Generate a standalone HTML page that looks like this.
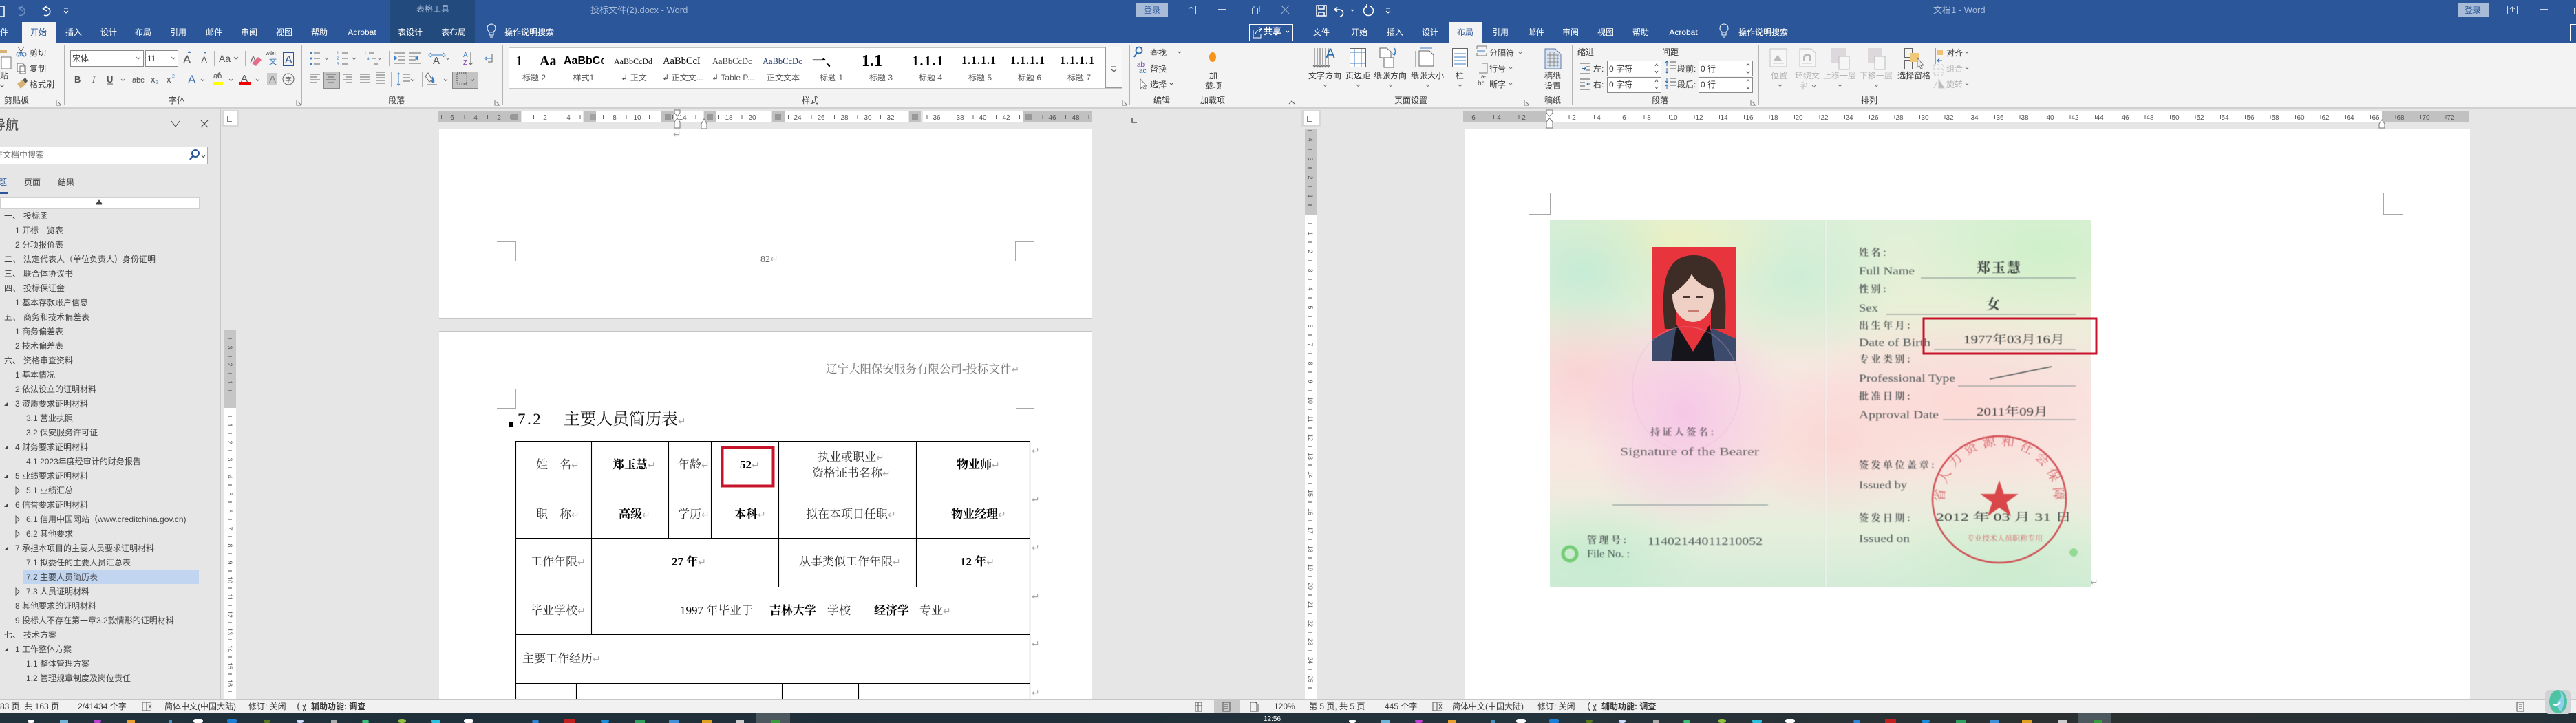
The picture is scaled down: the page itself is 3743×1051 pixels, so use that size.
<!DOCTYPE html>
<html lang="zh-CN"><head><meta charset="utf-8"><title>Word</title>
<style>
html,body{margin:0;padding:0;background:#e6e6e6}
body{position:relative;width:3743px;height:1051px;overflow:hidden;font-family:"Liberation Sans","Noto Sans CJK SC",sans-serif}
div,span,svg{position:absolute}
span{white-space:nowrap;line-height:12px;font-size:12px;color:#3a3a3a}
span i{position:static;font:normal 14px/12px "DejaVu Sans",sans-serif;color:#aaa}
.c{transform:translateX(-50%)}
.w{color:#fff}
.g{color:#b4b4b4}
.n{color:#444}
.u{line-height:17px;font-size:17px;font-family:"Liberation Serif","Noto Serif CJK SC",serif;color:#333}
.u b{color:#000}
.s{color:#555}
.r{background:#c1c1c1;top:162px;height:16px}
.x{background:#fff;top:162px;height:16px}
.ri{height:16px;top:162px}
</style></head><body>

<!-- chrome backgrounds -->
<div style="left:0;top:0;width:3743px;height:62px;background:#2b579a"></div>
<div style="left:566px;top:0;width:124px;height:62px;background:#234a7d"></div>
<div style="left:0;top:62px;width:3743px;height:94px;background:#f3f3f3;border-bottom:2px solid #d0d0d0"></div>
<div style="left:32px;top:32px;width:49px;height:31px;background:#f3f3f3"></div>
<div style="left:2105px;top:32px;width:49px;height:31px;background:#f3f3f3"></div>
<div style="left:1651px;top:5px;width:46px;height:19px;background:#a8bcd8"></div>
<div style="left:3571px;top:5px;width:45px;height:19px;background:#a8bcd8"></div>
<div style="left:1815px;top:35px;width:62px;height:23px;border:1px solid #fff"></div>
<div style="left:3735px;top:35px;width:20px;height:23px;border:1px solid #fff"></div>

<!-- titles -->
<span class="c" style="left:629px;top:7px;color:#a9bcd8">表格工具</span>
<span style="left:858px;top:9px;color:#a9bcd8;font-size:13px">投标文件(2).docx - Word</span>
<span style="left:2809px;top:9px;color:#a9bcd8;font-size:13px">文档1 - Word</span>
<span class="c" style="left:1674px;top:9px;color:#2b579a">登录</span>
<span class="c" style="left:3593px;top:9px;color:#2b579a">登录</span>
<span style="left:1836px;top:40px;color:#fff;font-weight:bold;font-size:13px">共享</span>

<!-- tabs left -->
<span class="w" style="left:-12px;top:41px">文件</span>
<span class="c" style="left:56px;top:41px;color:#2b579a">开始</span>
<span class="w c" style="left:107px;top:41px">插入</span>
<span class="w c" style="left:158px;top:41px">设计</span>
<span class="w c" style="left:208px;top:41px">布局</span>
<span class="w c" style="left:259px;top:41px">引用</span>
<span class="w c" style="left:311px;top:41px">邮件</span>
<span class="w c" style="left:362px;top:41px">审阅</span>
<span class="w c" style="left:413px;top:41px">视图</span>
<span class="w c" style="left:464px;top:41px">帮助</span>
<span class="w c" style="left:526px;top:41px">Acrobat</span>
<span class="w c" style="left:596px;top:41px">表设计</span>
<span class="w c" style="left:659px;top:41px">表布局</span>
<span class="w" style="left:733px;top:41px">操作说明搜索</span>
<!-- tabs right -->
<span class="w c" style="left:1920px;top:41px">文件</span>
<span class="w c" style="left:1975px;top:41px">开始</span>
<span class="w c" style="left:2027px;top:41px">插入</span>
<span class="w c" style="left:2078px;top:41px">设计</span>
<span class="c" style="left:2129px;top:41px;color:#2b579a">布局</span>
<span class="w c" style="left:2180px;top:41px">引用</span>
<span class="w c" style="left:2232px;top:41px">邮件</span>
<span class="w c" style="left:2282px;top:41px">审阅</span>
<span class="w c" style="left:2333px;top:41px">视图</span>
<span class="w c" style="left:2384px;top:41px">帮助</span>
<span class="w c" style="left:2446px;top:41px">Acrobat</span>
<span class="w" style="left:2526px;top:41px">操作说明搜索</span>

<!-- left ribbon -->
<span style="left:0;top:104px">贴</span>
<span style="left:43px;top:71px">剪切</span>
<span style="left:43px;top:94px">复制</span>
<span style="left:43px;top:117px">格式刷</span>
<span class="c" style="left:24px;top:140px">剪贴板</span>
<div style="left:102px;top:73px;width:105px;height:22px;background:#fff;border:1px solid #8a8a8a"></div>
<div style="left:211px;top:73px;width:46px;height:22px;background:#fff;border:1px solid #8a8a8a"></div>
<span style="left:105px;top:79px">宋体</span>
<span style="left:214px;top:79px">11</span>
<div style="left:470px;top:104px;width:22px;height:23px;background:#c4c4c4;border:1px solid #8a8a8a"></div>
<div style="left:657px;top:104px;width:36px;height:23px;background:#c4c4c4;border:1px solid #8a8a8a"></div>
<span class="c" style="left:257px;top:140px">字体</span>
<span class="c" style="left:576px;top:140px">段落</span>
<span class="c" style="left:1177px;top:140px">样式</span>
<span style="left:1671px;top:71px">查找</span>
<span style="left:1671px;top:94px">替换</span>
<span style="left:1671px;top:117px">选择</span>
<span class="c" style="left:1688px;top:140px">编辑</span>
<span class="c" style="left:1763px;top:104px">加</span>
<span class="c" style="left:1763px;top:119px">载项</span>
<span class="c" style="left:1762px;top:140px">加载项</span>

<!-- style gallery -->
<div style="left:739px;top:68px;width:891px;height:58px;background:#fff;border-top:2px solid #c6c6c6;border-bottom:2px solid #c6c6c6;border-left:1px solid #c6c6c6"></div>
<div style="left:1606px;top:68px;width:23px;height:58px;background:#f8f8f8;border:1px solid #999"></div>
<span style="left:749px;top:79px;font:20px/20px 'Liberation Serif',serif;color:#000">1</span>
<span style="left:784px;top:79px;font:bold 20px/20px 'Liberation Serif',serif;color:#000">Aa</span>
<div style="left:819px;top:76px;width:59px;height:26px;overflow:hidden"><span style="left:0;top:4px;font:bold 16px/18px 'Liberation Sans',sans-serif;color:#000">AaBbCc</span></div>
<div style="left:892px;top:76px;width:58px;height:26px;overflow:hidden"><span style="left:0;top:6px;font:12px/14px 'Liberation Serif',serif;color:#000">AaBbCcDd</span></div>
<span style="left:963px;top:81px;font:14.5px/16px 'Liberation Serif',serif;color:#000">AaBbCcI</span>
<div style="left:1035px;top:76px;width:59px;height:26px;overflow:hidden"><span style="left:0;top:6px;font:12.5px/14px 'Liberation Serif',serif;color:#444">AaBbCcDc</span></div>
<div style="left:1108px;top:76px;width:58px;height:26px;overflow:hidden"><span style="left:0;top:6px;font:12.5px/14px 'Liberation Serif',serif;color:#1f3864">AaBbCcDc</span></div>
<span style="left:1180px;top:76px;font:bold 20px/22px 'Noto Serif CJK SC',serif;color:#000">一、</span>
<span style="left:1252px;top:77px;font:bold 24px/24px 'Liberation Serif',serif;color:#000">1.1</span>
<span style="left:1325px;top:79px;font:bold 20px/20px 'Liberation Serif',serif;color:#000;letter-spacing:1.5px">1.1.1</span>
<div style="left:1397px;top:76px;width:57px;height:26px;overflow:hidden"><span style="left:0;top:5px;font:bold 16px/16px 'Liberation Serif',serif;color:#000;letter-spacing:1px">1.1.1.1</span></div>
<div style="left:1468px;top:76px;width:58px;height:26px;overflow:hidden"><span style="left:0;top:5px;font:bold 16px/16px 'Liberation Serif',serif;color:#000;letter-spacing:1px">1.1.1.1</span></div>
<div style="left:1540px;top:76px;width:58px;height:26px;overflow:hidden"><span style="left:0;top:5px;font:bold 16px/16px 'Liberation Serif',serif;color:#000;letter-spacing:1px">1.1.1.1</span></div>
<span class="s c" style="left:776px;top:107px">标题 2</span>
<span class="s c" style="left:848px;top:107px">样式1</span>
<span class="s c" style="left:921px;top:107px">↲ 正文</span>
<span class="s c" style="left:992px;top:107px">↲ 正文文...</span>
<span class="s c" style="left:1065px;top:107px">↲ Table P...</span>
<span class="s c" style="left:1138px;top:107px">正文文本</span>
<span class="s c" style="left:1208px;top:107px">标题 1</span>
<span class="s c" style="left:1280px;top:107px">标题 3</span>
<span class="s c" style="left:1352px;top:107px">标题 4</span>
<span class="s c" style="left:1424px;top:107px">标题 5</span>
<span class="s c" style="left:1496px;top:107px">标题 6</span>
<span class="s c" style="left:1568px;top:107px">标题 7</span>

<!-- right ribbon -->
<span class="c" style="left:1925px;top:104px">文字方向</span>
<span class="c" style="left:1973px;top:104px">页边距</span>
<span class="c" style="left:2020px;top:104px">纸张方向</span>
<span class="c" style="left:2074px;top:104px">纸张大小</span>
<span class="c" style="left:2121px;top:104px">栏</span>
<span style="left:2164px;top:71px">分隔符</span>
<span style="left:2164px;top:94px">行号</span>
<span style="left:2164px;top:117px">断字</span>
<span class="c" style="left:2050px;top:140px">页面设置</span>
<span class="c" style="left:2256px;top:104px">稿纸</span>
<span class="c" style="left:2256px;top:119px">设置</span>
<span class="c" style="left:2256px;top:140px">稿纸</span>
<span style="left:2292px;top:70px">缩进</span>
<span style="left:2415px;top:70px">间距</span>
<span style="left:2315px;top:94px">左:</span>
<span style="left:2315px;top:117px">右:</span>
<span style="left:2437px;top:94px">段前:</span>
<span style="left:2437px;top:117px">段后:</span>
<div style="left:2335px;top:88px;width:77px;height:21px;background:#fff;border:1px solid #8a8a8a"></div>
<div style="left:2335px;top:112px;width:77px;height:21px;background:#fff;border:1px solid #8a8a8a"></div>
<div style="left:2468px;top:88px;width:77px;height:21px;background:#fff;border:1px solid #8a8a8a"></div>
<div style="left:2468px;top:112px;width:77px;height:21px;background:#fff;border:1px solid #8a8a8a"></div>
<span style="left:2338px;top:94px">0 字符</span>
<span style="left:2338px;top:117px">0 字符</span>
<span style="left:2471px;top:94px">0 行</span>
<span style="left:2471px;top:117px">0 行</span>
<span class="c" style="left:2412px;top:140px">段落</span>
<span class="g c" style="left:2585px;top:104px">位置</span>
<span class="g c" style="left:2626px;top:104px">环绕文</span>
<span class="g" style="left:2614px;top:119px">字</span>
<span class="g c" style="left:2673px;top:104px">上移一层</span>
<span class="g c" style="left:2726px;top:104px">下移一层</span>
<span class="c" style="left:2781px;top:104px">选择窗格</span>
<span style="left:2828px;top:71px">对齐</span>
<span class="g" style="left:2828px;top:94px">组合</span>
<span class="g" style="left:2828px;top:117px">旋转</span>
<span class="c" style="left:2716px;top:140px">排列</span>

<!-- nav panel -->
<div style="left:0;top:158px;width:320px;height:858px;background:#e6e6e6;border-right:1px solid #c8c8c8"></div>
<span style="left:-11px;top:173px;font-size:19px;line-height:20px;color:#444">导航</span>
<div style="left:-2px;top:213px;width:302px;height:24px;background:#fff;border:1px solid #ababab"></div>
<span style="left:-8px;top:219px;color:#777">在文档中搜索</span>
<span style="left:-14px;top:259px;color:#2b579a">标题</span>
<span class="n" style="left:35px;top:259px">页面</span>
<span class="n" style="left:84px;top:259px">结果</span>
<div style="left:0;top:279px;width:11px;height:3px;background:#2b579a"></div>
<div style="left:0;top:287px;width:288px;height:15px;background:#fff;border:1px solid #cfcfcf"></div>
<div style="left:33px;top:829px;width:256px;height:20px;background:#c2d5f0"></div>
<span class="n" style="left:6px;top:308px">一、</span><span class="n" style="left:34px;top:308px">投标函</span>
<span class="n" style="left:22px;top:329px">1 开标一览表</span>
<span class="n" style="left:22px;top:350px">2 分项报价表</span>
<span class="n" style="left:6px;top:371px">二、</span><span class="n" style="left:34px;top:371px">法定代表人（单位负责人）身份证明</span>
<span class="n" style="left:6px;top:392px">三、</span><span class="n" style="left:34px;top:392px">联合体协议书</span>
<span class="n" style="left:6px;top:413px">四、</span><span class="n" style="left:34px;top:413px">投标保证金</span>
<span class="n" style="left:22px;top:434px">1 基本存款账户信息</span>
<span class="n" style="left:6px;top:455px">五、</span><span class="n" style="left:34px;top:455px">商务和技术偏差表</span>
<span class="n" style="left:22px;top:476px">1 商务偏差表</span>
<span class="n" style="left:22px;top:497px">2 技术偏差表</span>
<span class="n" style="left:6px;top:518px">六、</span><span class="n" style="left:34px;top:518px">资格审查资料</span>
<span class="n" style="left:22px;top:539px">1 基本情况</span>
<span class="n" style="left:22px;top:560px">2 依法设立的证明材料</span>
<span class="n" style="left:22px;top:581px">3 资质要求证明材料</span>
<span class="n" style="left:38px;top:602px">3.1 营业执照</span>
<span class="n" style="left:38px;top:623px">3.2 保安服务许可证</span>
<span class="n" style="left:22px;top:644px">4 财务要求证明材料</span>
<span class="n" style="left:38px;top:665px">4.1 2023年度经审计的财务报告</span>
<span class="n" style="left:22px;top:686px">5 业绩要求证明材料</span>
<span class="n" style="left:38px;top:707px">5.1 业绩汇总</span>
<span class="n" style="left:22px;top:728px">6 信誉要求证明材料</span>
<span class="n" style="left:38px;top:749px">6.1 信用中国网站（www.creditchina.gov.cn)</span>
<span class="n" style="left:38px;top:770px">6.2 其他要求</span>
<span class="n" style="left:22px;top:791px">7 承担本项目的主要人员要求证明材料</span>
<span class="n" style="left:38px;top:812px">7.1 拟委任的主要人员汇总表</span>
<span class="n" style="left:38px;top:833px">7.2 主要人员简历表</span>
<span class="n" style="left:38px;top:854px">7.3 人员证明材料</span>
<span class="n" style="left:22px;top:875px">8 其他要求的证明材料</span>
<span class="n" style="left:22px;top:896px">9 投标人不存在第一章3.2款情形的证明材料</span>
<span class="n" style="left:6px;top:917px">七、</span><span class="n" style="left:34px;top:917px">技术方案</span>
<span class="n" style="left:22px;top:938px">1 工作整体方案</span>
<span class="n" style="left:38px;top:959px">1.1 整体管理方案</span>
<span class="n" style="left:38px;top:980px">1.2 管理规章制度及岗位责任</span>

<!-- pages -->
<div style="left:638px;top:187px;width:948px;height:275px;background:#fff;border-bottom:1px solid #c6c6c6"></div>
<div style="left:638px;top:481px;width:948px;height:535px;background:#fff;border-top:1px solid #c6c6c6"></div>
<div style="left:2128px;top:187px;width:1460px;height:829px;background:#fff;border-left:1px solid #c6c6c6"></div>
<span style="left:978px;top:190px"><i>↵</i></span>
<span style="left:1105px;top:371px;font-family:'Liberation Serif',serif;color:#666;font-size:14px">82<i>↵</i></span>

<!-- horizontal ruler left -->
<div class="r" style="left:636px;width:121px"></div>
<div class="x" style="left:759px;width:88px"></div>
<div class="r" style="left:849px;width:17px"></div>
<div class="x" style="left:866px;width:95px"></div>
<div class="r" style="left:961px;width:18px"></div>
<div class="x" style="left:980px;width:42px"></div>
<div class="r" style="left:1023px;width:17px"></div>
<div class="x" style="left:1041px;width:80px"></div>
<div class="r" style="left:1122px;width:18px"></div>
<div class="x" style="left:1141px;width:179px"></div>
<div class="r" style="left:1321px;width:17px"></div>
<div class="x" style="left:1341px;width:145px"></div>
<div class="r" style="left:1486px;width:100px"></div>
<!-- horizontal ruler right -->
<div class="r" style="left:2126px;width:121px"></div>
<div class="x" style="left:2247px;width:1214px"></div>
<div class="r" style="left:3461px;width:127px"></div>
<!-- tick overlays -->
<div class="ri" style="left:640px;width:946px;background:repeating-linear-gradient(90deg,transparent 0 0.8px,#666 0.8px 1.8px,transparent 1.8px 33.6px);background-size:100% 6px;background-repeat:no-repeat;background-position:0 5px"></div>
<div class="ri" style="left:2133px;width:1455px;background:repeating-linear-gradient(90deg,transparent 0 0.8px,#666 0.8px 1.8px,transparent 1.8px 36.4px);background-size:100% 6px;background-repeat:no-repeat;background-position:0 5px"></div>

<!-- vertical rulers -->
<div style="left:326px;top:480px;width:17px;height:113px;background:#c6c6c6"></div>
<div style="left:326px;top:593px;width:17px;height:423px;background:#fff"></div>
<div style="left:1896px;top:187px;width:17px;height:126px;background:#c6c6c6"></div>
<div style="left:1896px;top:313px;width:17px;height:703px;background:#fff"></div>
<div style="left:323px;top:160px;width:24px;height:24px;background:#d8d8d8"></div>
<div style="left:326px;top:162px;width:18px;height:20px;background:#fff"></div>
<div style="left:1891px;top:160px;width:29px;height:24px;background:#d8d8d8"></div>
<div style="left:1895px;top:162px;width:21px;height:20px;background:#fff"></div>

<!-- header + table text -->
<span class="u" style="left:1200px;top:528px;font-size:16.5px;color:#777">辽宁大阳保安服务有限公司-投标文件<i>↵</i></span>
<div style="left:748px;top:549px;width:728px;height:1px;background:#808080"></div>
<div style="left:740px;top:614px;width:5px;height:6px;background:#000"></div>
<span style="left:752px;top:598px;font:23px/24px 'Liberation Serif',serif;color:#111;letter-spacing:2.5px">7.2</span>
<span style="left:819px;top:598px;font:23.7px/24px 'Liberation Serif','Noto Serif CJK SC',serif;color:#111">主要人员简历表<i>↵</i></span>

<span class="u" style="left:779px;top:667px">姓　名<i>↵</i></span>
<span class="u" style="left:890px;top:667px"><b>郑玉慧</b><i>↵</i></span>
<span class="u" style="left:985px;top:667px">年龄<i>↵</i></span>
<span class="u" style="left:1075px;top:667px"><b>52</b><i>↵</i></span>
<span class="u" style="left:1188px;top:656px">执业或职业<i>↵</i></span>
<span class="u" style="left:1180px;top:679px">资格证书名称<i>↵</i></span>
<span class="u" style="left:1390px;top:667px"><b>物业师</b><i>↵</i></span>
<span class="u" style="left:779px;top:739px">职　称<i>↵</i></span>
<span class="u" style="left:899px;top:739px"><b>高级</b><i>↵</i></span>
<span class="u" style="left:985px;top:739px">学历<i>↵</i></span>
<span class="u" style="left:1067px;top:739px"><b>本科</b><i>↵</i></span>
<span class="u" style="left:1171px;top:739px">拟在本项目任职<i>↵</i></span>
<span class="u" style="left:1382px;top:739px"><b>物业经理</b><i>↵</i></span>
<span class="u" style="left:771px;top:808px">工作年限<i>↵</i></span>
<span class="u" style="left:976px;top:808px"><b>27 年</b><i>↵</i></span>
<span class="u" style="left:1161px;top:808px">从事类似工作年限<i>↵</i></span>
<span class="u" style="left:1395px;top:808px"><b>12 年</b><i>↵</i></span>
<span class="u" style="left:771px;top:879px">毕业学校<i>↵</i></span>
<span class="u" style="left:988px;top:879px"><b style="font-weight:normal">1997</b> 年毕业于</span>
<span class="u" style="left:1118px;top:879px"><b>吉林大学</b></span>
<span class="u" style="left:1202px;top:879px">学校</span>
<span class="u" style="left:1270px;top:879px"><b>经济学</b></span>
<span class="u" style="left:1336px;top:879px">专业<i>↵</i></span>
<span class="u" style="left:759px;top:949px">主要工作经历<i>↵</i></span>
<span style="left:1499px;top:650px"><i>↵</i></span>
<span style="left:1499px;top:721px"><i>↵</i></span>
<span style="left:1499px;top:791px"><i>↵</i></span>
<span style="left:1499px;top:862px"><i>↵</i></span>
<span style="left:1499px;top:931px"><i>↵</i></span>
<span style="left:1499px;top:1002px"><i>↵</i></span>
<span style="left:3037px;top:841px"><i>↵</i></span>

<!-- certificate image -->
<div style="left:2252px;top:320px;width:786px;height:533px;background:
radial-gradient(ellipse 150px 170px at 25% 53%,rgba(245,192,232,.8),transparent),
radial-gradient(ellipse 240px 130px at 76% 50%,rgba(252,216,212,.9),transparent),
radial-gradient(ellipse 130px 110px at 6% 42%,rgba(250,204,208,.7),transparent),
radial-gradient(ellipse 150px 110px at 52% 60%,rgba(250,210,208,.7),transparent),
radial-gradient(ellipse 150px 120px at 6% 14%,rgba(190,234,214,.8),transparent),
radial-gradient(ellipse 180px 90px at 22% 6%,rgba(238,240,190,.8),transparent),
radial-gradient(ellipse 150px 120px at 46% 16%,rgba(198,236,214,.75),transparent),
radial-gradient(ellipse 200px 110px at 92% 8%,rgba(198,240,196,.7),transparent),
radial-gradient(ellipse 160px 90px at 8% 92%,rgba(190,234,204,.75),transparent),
radial-gradient(ellipse 200px 100px at 85% 95%,rgba(200,236,204,.75),transparent),
linear-gradient(180deg,#dff0d8 0,#e8f0d6 22%,#f9e4e2 46%,#f8e6e0 66%,#e5efdc 85%,#d4ecd8 100%)"></div>
<div style="left:2651px;top:320px;width:4px;height:533px;background:linear-gradient(90deg,rgba(190,190,190,.18),rgba(255,255,255,.4),rgba(200,200,200,.15))"></div>

<!-- master svg: lines, icons, ruler numbers -->
<svg style="left:0;top:0" width="3743" height="1051" viewBox="0 0 3743 1051" fill="none">
<!-- ribbon separators -->
<g stroke="#b4b4b4"><path d="M93.500 66V152M438.500 66V152M730.500 66V152M1641.500 66V152M1733.500 66V152M1791.500 66V152M2227.500 66V152M2284.500 66V152M2555.500 66V152M2878.500 66V152"/>
<path d="M311.500 74V96M356.500 74V96M264.500 104V126M565.500 74V96M620.500 74V96M665.500 74V96M697.500 74V96M568.500 104V126M613.500 104V126"/></g>

<!-- QAT left -->
<g stroke="#fff" stroke-width="1.500"><path d="M-4 9H6V24H-4"/><path d="M62 13a6 6 0 1 1 2 9M68 8l-5 5 5 3"/></g>
<path d="M36 12a6 6 0 1 0 -2 10M29 8l5 4-5 4" stroke="#6f8fbf" stroke-width="1.500" transform="matrix(-1 0 0 1 62 0)"/>
<path d="M93 12h6M93 16l3 3 3-3" stroke="#fff"/>
<!-- QAT right -->
<g stroke="#fff" stroke-width="1.500"><rect x="1913" y="8" width="14" height="15"/><path d="M1916 8v5h8V8M1916 23v-5h8v5"/><path d="M1943 10l-4 4 4 3M1940 14h6a5 5 0 0 1 1 10"/><path d="M1986 9a7 7 0 1 0 5 0M1986 6v6"/></g>
<path d="M2014 12h6M2014 16l3 3 3-3M1963 14l2 2 2-2" stroke="#fff"/>
<!-- window controls -->
<g stroke="#cfdaea"><rect x="1723.500" y="8.500" width="14" height="12"/><path d="M1727 13l3.500-3 3.500 3M1730.500 10v7M1770 13.500h11M1819.500 11.500v9h8v-9zM1822 11.500v-3h8v9h-2"/>
<rect x="3643.500" y="8.500" width="14" height="12"/><path d="M3647 13l3.500-3 3.500 3M3650.500 10v7M3691 13.500h11M3740.500 11.500v9h8v-9z"/></g>
<path d="M1862 8l11 12M1873 8l-11 12" stroke="#9fb4d4"/>
<!-- share icon -->
<path d="M1821 43v12h11v-6M1824 50c1-5 4-7 9-8M1829 39l4 3-3 4" stroke="#fff"/><path d="M1869 45l2 2 2-2" stroke="#fff"/>
<!-- bulbs -->
<g stroke="#fff"><circle cx="714" cy="41" r="6"/><path d="M711 47v4h6v-4M712 54h4"/><circle cx="2505" cy="41" r="6"/><path d="M2502 47v4h6v-4M2503 54h4"/></g>

<!-- clipboard -->
<path d="M-3 72h13v5H-3z" fill="#d6b273"/><path d="M2 83h14v17H2z" fill="#fff" stroke="#777"/>
<path d="M0 123l3 3 3-3" stroke="#555"/>
<path d="M26 68l9 14M35 68l-9 14" stroke="#555"/><circle cx="27" cy="79" r="3" stroke="#3f7fc4"/><circle cx="35" cy="79" r="3" stroke="#3f7fc4"/>
<path d="M25 92h8l3 3v9H25zM29 96h8v11h-8z" stroke="#666" fill="#fff"/>
<path d="M25 122l8-6 5 6-8 7z" fill="#d6b273"/><path d="M33 116l4-3 3 5-3 3z" fill="#555"/>
<!-- font group row1 -->
<g font-family="Liberation Sans,sans-serif" font-size="17" fill="#555">
<text x="266" y="92">A</text><text x="292" y="92" font-size="14">A</text><text x="318" y="90" font-size="14">Aa</text><text x="363" y="92" fill="#666" font-size="15">A</text>
<text x="414" y="92" fill="#2b579a" font-size="16">A</text>
<text x="386" y="80" font-size="8" fill="#444">wén</text><text x="391" y="93" font-size="11" fill="#2b6cb0" font-family="Noto Sans CJK SC,sans-serif">文</text>
</g>
<path d="M275 74l2.500 3h-5zM298 78l2.500-3h-5z" fill="#3f7fc4"/><rect x="411.500" y="76.500" width="15" height="19" stroke="#2b579a"/><path d="M366 92l9-9 5 4-8 9z" fill="#e86a8a"/>
<!-- font row2 -->
<g font-family="Liberation Sans,sans-serif" font-size="13" fill="#555">
<text x="108" y="120" font-weight="bold">B</text><text x="134" y="120" font-style="italic" font-family="Liberation Serif,serif">I</text><text x="155" y="120" font-weight="bold">U</text>
<text x="192" y="120" font-size="11">abc</text><text x="219" y="120">x</text><text x="226" y="122" font-size="7" fill="#3f7fc4">2</text><text x="242" y="120">x</text><text x="250" y="113" font-size="7" fill="#3f7fc4">2</text>
<text x="273" y="121" font-size="17" fill="#2b579a" stroke="#a7c4e6" stroke-width=".6">A</text>
<text x="310" y="114" font-size="11">ab</text><text x="350" y="119" font-size="15">A</text>
<text x="391" y="120" font-size="15" fill="#333">A</text>
<text x="414" y="120" font-size="10" font-family="Noto Sans CJK SC,sans-serif">字</text></g>
<rect x="388" y="106" width="14" height="18" fill="#b3b3b3" opacity=".6"/>
<circle cx="419" cy="115" r="8" stroke="#666"/>
<path d="M155 122h9" stroke="#555"/><path d="M193 116h14" stroke="#555"/>
<rect x="309" y="119" width="15" height="4" fill="#ff0"/><rect x="348" y="119" width="16" height="4" fill="#e00"/>
<path d="M320 104l-6 10" stroke="#777" stroke-width="2"/>
<g stroke="#777"><path d="M198 83l3 3 3-3M249 83l3 3 3-3M340 83l3 3 3-3M176 115l2.500 2.500 2.500-2.500M292 115l2.500 2.500 2.500-2.500M333 115l2.500 2.500 2.500-2.500M372 115l2.500 2.500 2.500-2.500M472 84l2.500 2.500 2.500-2.500M512 84l2.500 2.500 2.500-2.500M549 84l2.500 2.500 2.500-2.500M648 84l2.500 2.500 2.500-2.500M597 115l2.500 2.500 2.500-2.500M645 115l2.500 2.500 2.500-2.500M684 115l2.500 2.500 2.500-2.500"/></g>
<!-- para row1 -->
<g stroke="#666"><path d="M456 77h9M456 85h9M456 93h9M497 77h9M497 85h9M497 93h9M536 77h8M540 85h7M544 93h5"/>
<path d="M572 77h16M578 82h10M578 87h10M572 92h16M595 77h16M595 82h10M595 87h10M595 92h16"/>
<path d="M709 90h6v-12"/></g>
<g fill="#3f7fc4"><circle cx="452" cy="77" r="1.500"/><circle cx="452" cy="85" r="1.500"/><circle cx="452" cy="93" r="1.500"/></g>
<g font-family="Liberation Sans,sans-serif" font-size="6.500" fill="#3f7fc4"><text x="489" y="79">1</text><text x="489" y="87">2</text><text x="489" y="95">3</text><text x="529" y="79">1</text><text x="533" y="87">a</text><text x="537" y="95">i</text></g>
<path d="M578 84.500l-5-3v6zM602 84.500l5-3v6z" fill="#3f7fc4"/>
<text x="629" y="93" font-family="Liberation Sans,sans-serif" font-size="15" fill="#555">A</text><path d="M626 80h18M626 77l-3 3 3 3M644 77l3 3-3 3" stroke="#3f7fc4"/>
<text x="673" y="83" font-family="Liberation Sans,sans-serif" font-size="10" fill="#3f7fc4">A</text><text x="673" y="94" font-family="Liberation Sans,sans-serif" font-size="10" fill="#7a3fb0">Z</text><path d="M684 75v19M681 91l3 3 3-3" stroke="#666"/>
<path d="M707 85h8M704 85l3-2v4z" stroke="#3f7fc4"/>
<!-- para row2 -->
<g stroke="#666"><path d="M451 108h14M451 112h9M451 116h14M451 120h9M474 108h14M476 112h10M474 116h14M476 120h10M498 108h14M503 112h9M498 116h14M503 120h9M523 108h14M523 112h14M523 116h14M523 120h14M546 105h14M546 109h14M546 113h14M546 117h14M546 121h14M586 108h10M586 113h10M586 118h10"/>
<path d="M579 106v18" stroke="#3f7fc4"/><path d="M577 108l2-2 2 2M577 122l2 2 2-2" stroke="#3f7fc4"/>
<path d="M622 106l6 10-4 3-6-8zM621 123h14"/></g>
<path d="M628 111c2 2 4 6 3 9-3 1-5-1-5-1z" fill="#3f7fc4"/>
<path d="M664 106h14v16h-14z" stroke="#333" stroke-dasharray="1.500 1.500"/>
<!-- styles scroll + launchers -->
<path d="M1615 97h7M1615 101l3.500 3 3.500-3" stroke="#444"/>
<g stroke="#777"><path d="M82 146v7h7M88 152l-4-4M431 146v7h7M437 152l-4-4M719 146v7h7M725 152l-4-4M1631 146v7h7M1637 152l-4-4M2215 146v7h7M2221 152l-4-4M2544 146v7h7M2550 152l-4-4"/></g>
<path d="M1873 151l4-4 4 4" stroke="#555"/>
<!-- edit group -->
<circle cx="1655" cy="73" r="4.500" stroke="#2b6cb0" stroke-width="1.800"/><path d="M1652 77l-4 6" stroke="#2b6cb0" stroke-width="2"/>
<path d="M1712 75l2 2 2-2M1700 121l2 2 2-2" stroke="#555"/>
<text x="1652" y="97" font-family="Liberation Sans,sans-serif" font-size="10" fill="#7a3fb0">ab</text><text x="1655" y="106" font-family="Liberation Sans,sans-serif" font-size="10" fill="#2b6cb0">ac</text>
<path d="M1657 115v14l3-3 3 4 2-1-3-4h4z" stroke="#777" fill="#fff"/>
<ellipse cx="1762" cy="83" rx="5" ry="7" fill="#f7941d"/>

<!-- page setup icons right ribbon -->
<g stroke="#666"><path d="M1910 70v27M1914 70v27M1918 70v27M1922 70v27M1926 70v27M1930 70v27"/><path d="M1908 95l2 3 2-3M1912 95l2 3 2-3M1916 95l2 3 2-3M1920 95l2 3 2-3M1924 95l2 3 2-3M1928 95l2 3 2-3"/></g>
<text x="1926" y="85" font-family="Liberation Sans,sans-serif" font-size="21" fill="#2b6cb0">A</text>
<rect x="1961.500" y="70.500" width="23" height="27" fill="#fff" stroke="#666"/><path d="M1968 71v26M1978 71v26M1962 76h22M1962 92h22" stroke="#3f7fc4"/>
<path d="M2005 70h10l6 5v9h-16z M2011 84h14v14h-14zM2011 84h10" fill="#fff" stroke="#666"/><path d="M2026 70c2 3 2 5 0 9M2023 78l3 2 2-3" stroke="#3f7fc4" stroke-width="1.500"/>
<path d="M2062 74h15l6 6v16h-21z" fill="#fff" stroke="#666"/><path d="M2064 70h17M2057 74v23" stroke="#3f7fc4"/>
<rect x="2110.500" y="70.500" width="22" height="27" fill="#fff" stroke="#666"/><path d="M2113 78h17M2113 83h17M2113 88h17M2113 93h17" stroke="#3f7fc4"/>
<g stroke="#777"><path d="M1923 123l2.500 2.500 2.500-2.500M1971 123l2.500 2.500 2.500-2.500M2018 123l2.500 2.500 2.500-2.500M2072 123l2.500 2.500 2.500-2.500M2119 123l2.500 2.500 2.500-2.500M2207 76l2 2 2-2M2193 98l2 2 2-2M2193 121l2 2 2-2M2584 123l2.500 2.500 2.500-2.500M2633 124l2.500 2.500 2.500-2.500M2671 123l2.500 2.500 2.500-2.500M2724 123l2.500 2.500 2.500-2.500M2856 75l2 2 2-2M2856 98l2 2 2-2M2856 121l2 2 2-2"/>
<path d="M2146 67h14M2146 81h14M2146 67v4M2160 67v4M2146 77v4M2160 77v4"/><path d="M2153 92h8v14h-12"/></g>
<path d="M2146 74h12" stroke="#3f7fc4"/>
<text x="2147" y="124" font-family="Liberation Sans,sans-serif" font-size="10" fill="#555">bc</text><text x="2152" y="114" font-family="Liberation Sans,sans-serif" font-size="8" fill="#555">a-</text>
<path d="M2245 71h15l8 8v21h-23z" fill="#dbe5f2" stroke="#5a7aa8"/><path d="M2248 80h17M2248 85h17M2248 90h17M2248 95h17M2252 76v22M2258 76v22M2263 80v18" stroke="#8a8a8a"/>
<!-- spinners & para icons -->
<g stroke="#555"><path d="M2405 96l2-3 2 3M2405 103l2 3 2-3M2405 119l2-3 2 3M2405 126l2 3 2-3M2538 96l2-3 2 3M2538 103l2 3 2-3M2538 119l2-3 2 3M2538 126l2 3 2-3"/>
<path d="M2296 92h15M2304 97h7M2304 102h7M2296 107h15M2296 115h15M2296 120h7M2296 125h7M2296 130h15M2427 90h8M2427 95h8M2427 100h8M2427 114h8M2427 119h8M2427 124h8"/></g>
<g stroke="#2b6cb0"><path d="M2298 99.500h6M2302 97l2 2.500-2 2.500M2311 122h-5M2308 120l-2 2 2 2M2422 89v7M2420 91l2-2 2 2M2422 99v7M2420 104l2 2 2-2M2422 113v7M2420 118l2 2 2-2M2422 123v7M2420 125l2-2 2 2"/></g>
<!-- arrange icons -->
<g stroke="#c4c4c4" fill="#f6f6f6"><path d="M2572 71h24v26h-24z"/><path d="M2615 71h17l6 6v20h-23z"/></g>
<path d="M2577 88l6-8 6 8z" fill="#bbb"/><path d="M2620 84a6 6 0 0 1 12 0v4h-3v-4a3 3 0 0 0-6 0v4h-3z" fill="#bbb"/><path d="M2576 92h16M2619 92h14" stroke="#ccc"/>
<rect x="2661" y="70" width="21" height="21" fill="#dcd8dc"/><rect x="2672" y="82" width="15" height="19" fill="#f6f6f6" stroke="#bbb"/>
<rect x="2714" y="70" width="21" height="21" fill="#dcd8dc"/><rect x="2724" y="82" width="15" height="19" fill="#f6f6f6" stroke="#bbb"/>
<rect x="2767.500" y="70.500" width="11" height="13" stroke="#666"/><rect x="2767.500" y="87.500" width="11" height="13" stroke="#666"/><rect x="2776" y="77" width="13" height="13" fill="#f0c878"/><path d="M2786 84v14l3-2 2 4 2-1-2-4h4z" fill="#eee" stroke="#777"/>
<path d="M2812 70v23" stroke="#555"/><rect x="2814" y="73" width="9" height="7" fill="#f0c078"/><path d="M2822 88h-7M2818 85l-3 3 3 3" stroke="#2b6cb0"/>
<path d="M2810 94h14v15h-14zM2816 100h6v5h-6z" stroke="#c4c4c4" stroke-dasharray="3 2"/>
<path d="M2810 128l5-10M2817 116v12h8z" stroke="#c4c4c4" fill="#bbb"/>

<!-- nav icons -->
<path d="M249 176l6 8 6-8M292 175l10 10M302 175l-10 10" stroke="#444"/>
<circle cx="284" cy="223" r="5" stroke="#2b579a" stroke-width="2"/><path d="M280 227l-4 5" stroke="#2b579a" stroke-width="2.400"/><path d="M293 226l2.500 2.500 2.500-2.500" stroke="#444"/>
<path d="M144 291l4 5h-8zM140 297h8" fill="#444" stroke="#444"/>
<g fill="#444"><path d="M12 584v6H6zM12 647v6H6zM12 689v6H6zM12 731v6H6zM12 794v6H6zM12 941v6H6z"/></g>
<g stroke="#555"><path d="M23 708l5 5-5 5zM23 750l5 5-5 5zM23 771l5 5-5 5zM23 855l5 5-5 5z"/></g>

<!-- ruler marker icons -->
<path d="M980 160h8v4l-4 5-4-5zM980 186h8v-9l-4-5-4 5z" fill="#fff" stroke="#777"/>
<path d="M1019 180l4-7 4 7v7h-8z" fill="#fff" stroke="#777"/>
<path d="M2247 160h9v4l-4.500 5-4.500-5zM2247 186h9v-9l-4.500-5-4.500 5z" fill="#fff" stroke="#777"/>
<path d="M3457 186v-6l4-6 4 6v6z" fill="#fff" stroke="#777"/>
<path d="M331 168v9h6M1900 168v9h6M1645 172v6h7" stroke="#555" stroke-width="1.500"/>
<rect x="858" y="165" width="8" height="10" fill="#8d8d8d" opacity=".6"/><rect x="966" y="165" width="9" height="10" fill="#8d8d8d" opacity=".8"/><rect x="1027" y="165" width="9" height="10" fill="#8d8d8d" opacity=".8"/><rect x="1126" y="165" width="9" height="10" fill="#8d8d8d" opacity=".8"/><rect x="1325" y="165" width="9" height="10" fill="#8d8d8d" opacity=".8"/><rect x="1490" y="165" width="9" height="10" fill="#8d8d8d" opacity=".8"/><rect x="743" y="165" width="9" height="10" fill="#8d8d8d" opacity=".8"/>

<!-- ruler numbers -->
<g font-family="Liberation Sans,sans-serif" font-size="10" fill="#555" text-anchor="middle">
<text x="657" y="174">6</text><text x="691" y="174">4</text><text x="725" y="174">2</text><text x="792" y="174">2</text><text x="826" y="174">4</text><text x="893" y="174">8</text><text x="926" y="174">10</text><text x="992" y="174">14</text><text x="1059" y="174">18</text><text x="1093" y="174">20</text><text x="1159" y="174">24</text><text x="1193" y="174">26</text><text x="1227" y="174">28</text><text x="1261" y="174">30</text><text x="1294" y="174">32</text><text x="1361" y="174">36</text><text x="1395" y="174">38</text><text x="1428" y="174">40</text><text x="1462" y="174">42</text><text x="1529" y="174">46</text><text x="1563" y="174">48</text>
<text x="2141" y="174">6</text><text x="2178" y="174">4</text><text x="2214" y="174">2</text><text x="2287" y="174">2</text><text x="2323" y="174">4</text><text x="2360" y="174">6</text><text x="2396" y="174">8</text><text x="2432" y="174">10</text><text x="2469" y="174">12</text><text x="2505" y="174">14</text><text x="2542" y="174">16</text><text x="2578" y="174">18</text><text x="2614" y="174">20</text><text x="2651" y="174">22</text><text x="2687" y="174">24</text><text x="2724" y="174">26</text><text x="2760" y="174">28</text><text x="2797" y="174">30</text><text x="2833" y="174">32</text><text x="2869" y="174">34</text><text x="2906" y="174">36</text><text x="2942" y="174">38</text><text x="2979" y="174">40</text><text x="3015" y="174">42</text><text x="3051" y="174">44</text><text x="3088" y="174">46</text><text x="3124" y="174">48</text><text x="3161" y="174">50</text><text x="3197" y="174">52</text><text x="3233" y="174">54</text><text x="3270" y="174">56</text><text x="3306" y="174">58</text><text x="3343" y="174">60</text><text x="3379" y="174">62</text><text x="3415" y="174">64</text><text x="3452" y="174">66</text><text x="3488" y="174">68</text><text x="3525" y="174">70</text><text x="3561" y="174">72</text>
</g>
<!-- vertical ruler numbers -->
<g font-family="Liberation Sans,sans-serif" font-size="9" fill="#555" text-anchor="middle">
<text transform="translate(1901,203) rotate(90)">4</text><text transform="translate(1901,231) rotate(90)">3</text><text transform="translate(1901,258) rotate(90)">2</text><text transform="translate(1901,285) rotate(90)">1</text>
<text transform="translate(1901,339) rotate(90)">1</text><text transform="translate(1901,366) rotate(90)">2</text><text transform="translate(1901,393) rotate(90)">3</text><text transform="translate(1901,420) rotate(90)">4</text><text transform="translate(1901,447) rotate(90)">5</text><text transform="translate(1901,474) rotate(90)">6</text><text transform="translate(1901,501) rotate(90)">7</text><text transform="translate(1901,528) rotate(90)">8</text><text transform="translate(1901,555) rotate(90)">9</text><text transform="translate(1901,582) rotate(90)">10</text><text transform="translate(1901,609) rotate(90)">11</text><text transform="translate(1901,636) rotate(90)">12</text><text transform="translate(1901,663) rotate(90)">13</text><text transform="translate(1901,690) rotate(90)">14</text><text transform="translate(1901,717) rotate(90)">15</text><text transform="translate(1901,744) rotate(90)">16</text><text transform="translate(1901,771) rotate(90)">17</text><text transform="translate(1901,798) rotate(90)">18</text><text transform="translate(1901,825) rotate(90)">19</text><text transform="translate(1901,852) rotate(90)">20</text><text transform="translate(1901,879) rotate(90)">21</text><text transform="translate(1901,906) rotate(90)">22</text><text transform="translate(1901,933) rotate(90)">23</text><text transform="translate(1901,960) rotate(90)">24</text><text transform="translate(1901,987) rotate(90)">25</text>
<text transform="translate(331,505) rotate(90)">3</text><text transform="translate(331,530) rotate(90)">2</text><text transform="translate(331,556) rotate(90)">1</text>
<text transform="translate(331,618) rotate(90)">1</text><text transform="translate(331,643) rotate(90)">2</text><text transform="translate(331,668) rotate(90)">3</text><text transform="translate(331,693) rotate(90)">4</text><text transform="translate(331,718) rotate(90)">5</text><text transform="translate(331,743) rotate(90)">6</text><text transform="translate(331,768) rotate(90)">7</text><text transform="translate(331,793) rotate(90)">8</text><text transform="translate(331,818) rotate(90)">9</text><text transform="translate(331,843) rotate(90)">10</text><text transform="translate(331,868) rotate(90)">11</text><text transform="translate(331,893) rotate(90)">12</text><text transform="translate(331,918) rotate(90)">13</text><text transform="translate(331,943) rotate(90)">14</text><text transform="translate(331,968) rotate(90)">15</text><text transform="translate(331,993) rotate(90)">16</text>
</g>
<g stroke="#444"><path d="M1900 190h6M1900 217h6M1900 244h6M1900 271h6M1900 298h6M1900 325h6M1900 352h6M1900 379h6M1900 406h6M1900 433h6M1900 460h6M1900 487h6M1900 514h6M1900 541h6M1900 568h6M1900 595h6M1900 622h6M1900 649h6M1900 676h6M1900 703h6M1900 730h6M1900 757h6M1900 784h6M1900 811h6M1900 838h6M1900 865h6M1900 892h6M1900 919h6M1900 946h6M1900 973h6M1900 1000h6"/>
<path d="M331 492h6M331 518h6M331 543h6M331 568h6M331 605h6M331 630h6M331 655h6M331 680h6M331 705h6M331 730h6M331 755h6M331 780h6M331 805h6M331 830h6M331 855h6M331 880h6M331 905h6M331 930h6M331 955h6M331 980h6M331 1005h6"/></g>

<!-- crop marks -->
<g stroke="#a8a8a8"><path d="M722 351.500H749.500V379M1503 351.500H1475.500V379M722 593.500H749.500V566M1503 593.500H1476.500V566M2221 311.500H2252.500V281M3492 311.500H3463.500V281"/></g>
<!-- table -->
<g stroke="#000" stroke-width="1.100"><path d="M749.500 641.500H1496.500M749.500 712.500H1496.500M749.500 782.500H1496.500M749.500 853.500H1496.500M749.500 922.500H1496.500M749.500 993.500H1496.500"/>
<path d="M749.500 641V1016M1496.500 641V1016M859.500 641V922M971.500 641V782M1033.500 641V782M1131.500 641V853M1331.500 641V853M837.500 993V1016M1136.500 993V1016M1247.500 993V1016"/></g>
<rect x="1049.500" y="650" width="74" height="56.500" stroke="#c8142b" stroke-width="4"/>

<!-- certificate art -->
<g>
<rect x="2401" y="359" width="122" height="166" fill="#e8343c"/>
<path d="M2419 478c-6-60-2-107 42-107s50 47 45 107h-20v-30h-50v30z" fill="#3e2c26"/>
<ellipse cx="2460" cy="430" rx="30" ry="38" fill="#efd0c4"/>
<path d="M2430 428c0-26 12-44 32-44s28 20 28 36c-14-2-26-10-32-22-5 12-18 22-28 30z" fill="#3e2c26"/>
<path d="M2401 493l32-16 27 34 28-34 35 16v32h-122z" fill="#3c4a6c"/>
<path d="M2436 472l24 39 24-39 8 53h-64z" fill="#17151c"/>
<path d="M2446 432h10M2464 432h10" stroke="#4a342e" stroke-width="2"/><path d="M2452 452h16" stroke="#c87a72" stroke-width="2.500"/>
<ellipse cx="2450" cy="565" rx="78" ry="90" stroke="#e9b3dc" stroke-width="1.500" opacity=".3"/>
<g opacity=".9" filter="url(#bl)">
<g font-family="Noto Serif CJK SC,serif" font-weight="700" fill="#4a4e50" font-size="14" letter-spacing="3.500">
<text x="2701" y="372">姓名:</text><text x="2701" y="425">性别:</text><text x="2701" y="478">出生年月:</text><text x="2701" y="527">专业类别:</text><text x="2701" y="581">批准日期:</text><text x="2701" y="681">签发单位盖章:</text><text x="2701" y="758">签发日期:</text>
<text x="2398" y="633" fill="#6a5a68">持证人签名:</text><text x="2306" y="790">管理号:</text>
<text x="2872" y="396" font-size="20" fill="#2c3030" letter-spacing="2">郑玉慧</text><text x="2886" y="449" font-size="20" fill="#2c3030">女</text></g>
<g font-family="Liberation Serif,serif" fill="#3e4a4c" font-size="16">
<text x="2701" y="399" textLength="81" lengthAdjust="spacingAndGlyphs">Full Name</text><text x="2701" y="453" textLength="28" lengthAdjust="spacingAndGlyphs">Sex</text><text x="2701" y="503" textLength="104" lengthAdjust="spacingAndGlyphs">Date of Birth</text><text x="2701" y="555" textLength="140" lengthAdjust="spacingAndGlyphs">Professional Type</text><text x="2701" y="608" textLength="116" lengthAdjust="spacingAndGlyphs">Approval Date</text><text x="2701" y="710" textLength="70" lengthAdjust="spacingAndGlyphs">Issued by</text><text x="2701" y="788" textLength="74" lengthAdjust="spacingAndGlyphs">Issued on</text>
<text x="2354" y="662" textLength="202" lengthAdjust="spacingAndGlyphs" font-size="17" fill="#5a5a5a">Signature of the Bearer</text>
<text x="2394" y="792" textLength="167" lengthAdjust="spacingAndGlyphs">11402144011210052</text><text x="2306" y="810" textLength="62" lengthAdjust="spacingAndGlyphs">File No. :</text>
<text x="2853" y="499" textLength="147" lengthAdjust="spacingAndGlyphs" font-family="Liberation Serif,Noto Serif CJK SC,serif" font-size="17" fill="#262a2a">1977年03月16月</text>
<text x="2872" y="604" textLength="104" lengthAdjust="spacingAndGlyphs" font-family="Liberation Serif,Noto Serif CJK SC,serif" font-size="17" fill="#262a2a">2011年09月</text>
<text x="2813" y="757" textLength="197" lengthAdjust="spacingAndGlyphs" font-family="Liberation Serif,Noto Serif CJK SC,serif" font-size="16" fill="#262a2a">2012 年 03 月 31 日</text></g>
<g stroke="#8a9a98" stroke-width="1.200"><path d="M2791 404H3016M2741 457H3016M2810 508H3016M2845 561H3016M2823 610H3016M2343 734H2569"/></g>
<path d="M2891 551L2981 533" stroke="#3e4a4c" stroke-width="1.500"/>
<ellipse cx="2905" cy="726" rx="97" ry="92" stroke="#d04048" stroke-width="2.500"/>
<path id="arc" d="M2826 738A80 78 0 1 1 2984 738" stroke="none"/>
<text font-family="Noto Serif CJK SC,serif" font-size="19" fill="#d65a60"><textPath href="#arc" startOffset="3%" textLength="280">省人力资源和社会保障厅</textPath></text>
<path d="M2905 698l6.500 20h21l-17 12.500 6.500 20-17-12.500-17 12.500 6.500-20-17-12.500h21z" fill="#d8343a"/>
<text x="2858" y="786" font-family="Noto Serif CJK SC,serif" font-size="11" fill="#d65a60">专业技术人员职称专用</text>
<circle cx="2281" cy="805" r="10" stroke="#6cc96c" stroke-width="5"/>
<circle cx="3013" cy="803" r="6" fill="#8ed88e"/>
</g>
</g>
<defs><filter id="bl" x="-5%" y="-5%" width="110%" height="110%"><feGaussianBlur stdDeviation=".45"/></filter></defs>
<rect x="2795" y="463" width="251" height="51" stroke="#c8142b" stroke-width="3"/>

<!-- status icons -->
<path d="M207 1021h6v12h-6zM214 1021h6M214 1033h6M216 1024l4 6M220 1024l-4 6M2081 1021h6v12h-6zM2089 1021h6M2089 1033h6" stroke="#555"/>
</svg>

<!-- status bar -->
<div style="left:0;top:1016px;width:3743px;height:20px;background:#f1f1f1;border-top:1px solid #c6c6c6"></div>
<div style="left:1764px;top:1017px;width:38px;height:20px;background:#c8c8c8"></div>
<svg style="left:1770px;top:1018px" width="26" height="18" fill="none"><path d="M7 3h10v13H7zM9 6h6M9 9h6M9 12h6" stroke="#555"/></svg>
<svg style="left:1730px;top:1018px" width="100" height="18" fill="none"><path d="M7 3h9v13H7zM11 3v13M7 8h9M87 3h9v13h-9zM94 3l4 3v10h-4" stroke="#555"/></svg>
<svg style="left:3650px;top:1018px" width="24" height="18" fill="none"><path d="M7 3h10v13H7zM10 6h4M10 9h4M10 12h4" stroke="#555"/></svg>
<svg style="left:205px;top:1018px" width="20" height="18" fill="none"><path d="M2 3h6v12H2zM9 3h6M9 15h6M11 6l4 6M15 6l-4 6" stroke="#555"/></svg>
<svg style="left:2080px;top:1018px" width="20" height="18" fill="none"><path d="M2 3h6v12H2zM9 3h6M9 15h6M11 6l4 6M15 6l-4 6" stroke="#555"/></svg>
<span style="left:0;top:1021px">83 页, 共 163 页</span>
<span style="left:113px;top:1021px">2/41434 个字</span>
<span style="left:239px;top:1021px">简体中文(中国大陆)</span>
<span style="left:361px;top:1021px">修订: 关闭</span>
<span style="left:452px;top:1021px;font-weight:bold">辅助功能: 调查</span>
<span style="left:1851px;top:1021px">120%</span>
<span style="left:1902px;top:1021px">第 5 页, 共 5 页</span>
<span style="left:2012px;top:1021px">445 个字</span>
<span style="left:2110px;top:1021px">简体中文(中国大陆)</span>
<span style="left:2234px;top:1021px">修订: 关闭</span>
<span style="left:2327px;top:1021px;font-weight:bold">辅助功能: 调查</span>
<svg style="left:430px;top:1018px" width="20" height="18" fill="none"><path d="M5 3c-3 4-3 8 0 12M10 7l4 8M14 6l-4 10" stroke="#444" stroke-width="1.200"/></svg>
<svg style="left:2305px;top:1018px" width="20" height="18" fill="none"><path d="M5 3c-3 4-3 8 0 12M10 7l4 8M14 6l-4 10" stroke="#444" stroke-width="1.200"/></svg>

<!-- taskbar -->
<div style="left:0;top:1037px;width:3743px;height:14px;background:linear-gradient(90deg,#21323d,#1f2e38 40%,#25343c 60%,#2c3030 80%,#253139)"></div>
<div style="left:1099px;top:1037px;width:49px;height:14px;background:#4c575e"></div>
<div style="left:3019px;top:1037px;width:48px;height:14px;background:#4c575e"></div>
<span style="left:1836px;top:1041px;font-size:10px;color:#fff;line-height:10px">12:56</span>
<svg style="left:0;top:1037px" width="3743" height="14">
<g>
<rect x="40" y="9" width="10" height="5" rx="3" fill="#fff"/><rect x="87" y="9" width="12" height="5" fill="#6fb3d8"/><rect x="136" y="9" width="11" height="5" rx="3" fill="#c040d0"/><rect x="184" y="10" width="12" height="4" fill="#e8a030"/><rect x="245" y="9" width="5" height="5" fill="#4a90c0"/><rect x="281" y="8" width="14" height="6" rx="3" fill="#fff"/><rect x="330" y="8" width="14" height="6" rx="2" fill="#1a7fd8"/><rect x="383" y="9" width="10" height="5" rx="3" fill="#5a7a20"/><rect x="431" y="9" width="10" height="5" rx="3" fill="#cfdcff"/><rect x="481" y="9" width="8" height="5" fill="#aaa"/><rect x="526" y="10" width="10" height="4" rx="2" fill="#3ec07a"/><rect x="578" y="8" width="12" height="6" rx="5" fill="#8fc040"/><rect x="626" y="9" width="14" height="5" rx="2" fill="#2ac0e0"/><rect x="674" y="8" width="14" height="6" rx="3" fill="#fff"/>
<rect x="773" y="10" width="10" height="4" rx="2" fill="#2f86d8"/><rect x="820" y="8" width="16" height="6" fill="#c02020"/><rect x="873" y="9" width="12" height="5" rx="3" fill="#1a8fe0"/><rect x="923" y="9" width="14" height="5" fill="#2fa060"/><rect x="972" y="9" width="14" height="5" fill="#3f90d8"/><rect x="1020" y="10" width="14" height="4" fill="#e0a020"/><rect x="1069" y="9" width="12" height="5" fill="#ccc"/><rect x="1121" y="10" width="12" height="4" fill="#3a9a40"/>
<rect x="1960" y="9" width="10" height="5" rx="3" fill="#fff"/><rect x="2007" y="9" width="12" height="5" fill="#6fb3d8"/><rect x="2056" y="9" width="11" height="5" rx="3" fill="#c040d0"/><rect x="2104" y="10" width="12" height="4" fill="#e8a030"/><rect x="2167" y="9" width="5" height="5" fill="#4a90c0"/><rect x="2203" y="8" width="14" height="6" rx="3" fill="#fff"/><rect x="2251" y="8" width="14" height="6" rx="2" fill="#1a7fd8"/><rect x="2304" y="9" width="10" height="5" rx="3" fill="#5a7a20"/><rect x="2352" y="9" width="10" height="5" rx="3" fill="#cfdcff"/><rect x="2402" y="9" width="8" height="5" fill="#aaa"/><rect x="2446" y="10" width="10" height="4" rx="2" fill="#3ec07a"/><rect x="2496" y="8" width="12" height="6" rx="5" fill="#8fc040"/><rect x="2546" y="9" width="14" height="5" rx="2" fill="#2ac0e0"/><rect x="2594" y="8" width="14" height="6" rx="3" fill="#fff"/>
<rect x="2693" y="10" width="10" height="4" rx="2" fill="#2f86d8"/><rect x="2739" y="8" width="16" height="6" fill="#c02020"/><rect x="2792" y="9" width="12" height="5" rx="3" fill="#1a8fe0"/><rect x="2842" y="9" width="14" height="5" fill="#2fa060"/><rect x="2891" y="9" width="14" height="5" fill="#3f90d8"/><rect x="2938" y="10" width="14" height="4" fill="#e0a020"/><rect x="2991" y="9" width="12" height="5" fill="#ccc"/><rect x="3042" y="10" width="12" height="4" fill="#3a9a40"/>
</g></svg>
<!-- floating logo -->
<svg style="left:3696px;top:1002px" width="44" height="37" fill="none">
<rect x="2" y="1" width="38" height="35" rx="6" fill="#d0d4d6"/>
<ellipse cx="21" cy="18" rx="13" ry="17" fill="#4cc4a4"/>
<path d="M23 2c8 6 9 18 2 30-6-6-7-12-3-16 4-3 4-8 1-14z" fill="#8fd0ec"/>
<path d="M14 22c3 2 7 1 10-3" stroke="#fff" stroke-width="2"/>
</svg>
</body></html>
